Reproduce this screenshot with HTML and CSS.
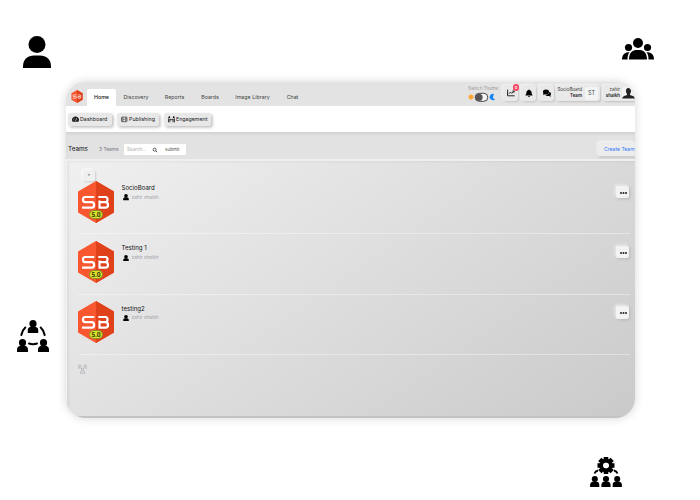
FILE: index.html
```
<!DOCTYPE html>
<html lang="en">
<head>
<meta charset="utf-8">
<title>Teams</title>
<link rel="stylesheet" href="styles.css">
</head>
<body>
<svg class="defs" width="0" height="0">
  <symbol id="user" viewBox="0 0 28 32"><circle cx="14" cy="8.5" r="8.5"/><path d="M0 32v-1.500C0 23 5 19.500 11 19.500h6c6 0 11 3.500 11 11V32z"/></symbol>
  <symbol id="bust" viewBox="0 0 12 14"><circle cx="6" cy="3.900" r="3.900"/><path d="M0 14v-2.500C0 8.800 1.500 7.500 3.500 7.200h5c2 .3 3.500 1.600 3.500 4.300V14z"/></symbol>
  <symbol id="hexlogo" viewBox="0 0 36 42">
    <path fill="#f9572f" d="M18 0 36 10.500v21L18 42 0 31.500v-21z"/>
    <path fill="#df421b" d="M18 0 36 10.500v21L18 42z"/>
    <path fill="none" stroke="#fff" stroke-width="2.200" d="M16.300 16H7q-2 0-2 2.600t2 2.600h6.800q2.300 0 2.300 2.700t-2.300 2.700H4M20.300 16h7.200q2 0 2 2.600t-2 2.600h-6M27.500 21.200q2.500 0 2.500 2.700t-2.500 2.700h-6V19.500"/>
  </symbol>
</svg>

<svg class="deco deco-user"><use href="#user"/></svg>
<svg class="deco deco-group" viewBox="0 0 32 22"><circle cx="16" cy="5" r="5"/><circle cx="6.500" cy="9.500" r="3.600"/><circle cx="25.500" cy="9.500" r="3.600"/><path d="M7 21.500c0-6 3-9.500 7-9.500h4c4 0 7 3.500 7 9.500zM0 21.500c0-4 2-7 6-7.300h1.500C6 16 5.500 18 5.500 21.500zM32 21.500c0-4-2-7-6-7.300h-1.500c1.500 1.800 2 3.800 2 7.300z"/></svg>
<svg class="deco deco-circle" viewBox="0 0 32 32">
  <use href="#bust" x="10.500" y="0" width="11" height="13"/><use href="#bust" x="0" y="19" width="11" height="13"/><use href="#bust" x="21" y="19" width="11" height="13"/>
  <path fill="none" stroke="#000" stroke-width="2" stroke-linecap="round" d="M8.300 7.500Q5 10.500 4.300 15M23.700 7.500Q27 10.500 27.700 15M12 23.500q4 1.300 8 0"/>
</svg>
<svg class="deco deco-gear" viewBox="0 0 32 30">
  <circle cx="16" cy="8.500" r="4.800" fill="none" stroke="#000" stroke-width="4"/>
  <g stroke="#000" stroke-width="4.600"><path d="M16 0v3.500M16 13.500V17M7.500 8.500H11M21 8.500h3.500M9.800 2.300l2.400 2.400M19.800 12.300l2.400 2.400M22.200 2.300l-2.400 2.400M12.200 12.300l-2.400 2.400"/></g>
  <circle cx="16" cy="8.500" r="2.800" fill="#fff"/>
  <path fill="none" stroke="#000" stroke-width="2" d="M4.500 16.500q1-2.500 3.500-3M27.500 16.500q-1-2.500-3.500-3"/>
  <use href="#bust" x="0" y="19" width="9.600" height="11"/><use href="#bust" x="11.200" y="19" width="9.600" height="11"/><use href="#bust" x="22.400" y="19" width="9.600" height="11"/>
</svg>

<main class="app">
  <header class="topbar">
    <svg class="brand"><use href="#hexlogo"/></svg>
    <nav class="nav">
      <a class="active">Home</a><a>Discovery</a><a>Reports</a><a>Boards</a><a>Image Library</a><a>Chat</a>
    </nav>
    <div class="theme">
      <span>Switch Theme</span>
      <svg width="28" height="10" viewBox="0 0 28 10">
        <circle cx="3" cy="5" r="2.200" fill="#ffa632"/><circle cx="3" cy="5" r="2.500" fill="none" stroke="#ffa632" stroke-width=".8" stroke-dasharray=".8 .7"/>
        <rect x="7.200" y="1.300" width="12.600" height="8" rx="4" fill="#f4f4f4" stroke="#333" stroke-width=".9"/><circle cx="11" cy="5.300" r="3.600" fill="#555"/>
        <path fill="#1686f5" d="M26 2a3.200 3.200 0 1 0 1.200 5.200Q23.500 7 26 2z"/>
      </svg>
    </div>
    <div class="tools">
      <span class="tool"><svg viewBox="0 0 8 8"><path fill="none" stroke="#111" stroke-width=".9" d="M.6.700v6.100h7M1.800 4.800l1.700-1.700 1.300 1.300L7 2.200M5.300 2H7v1.700"/></svg><b class="badge">0</b></span>
      <span class="tool"><svg viewBox="0 0 8 8"><path d="M4 .4c.5 0 .6.300.6.600 1.400.4 2 1.300 2 2.600 0 1.500.4 1.900.9 2.500v.4H.5v-.4c.5-.6.9-1 .9-2.500 0-1.300.6-2.200 2-2.600 0-.3.100-.6.600-.6zM3 7h2q-.2.900-1 .9T3 7z"/></svg></span>
      <span class="tool"><svg viewBox="0 0 8 8"><ellipse cx="3" cy="3" rx="3" ry="2.400"/><path d="M.8 3.500 0 6l2.500-1zM6.300 2.800C8.300 3.600 8.500 5.400 7.300 6.300L8 7.700l-2-.7C4.500 7.200 3 6.800 2.500 5.900 5 5.900 6.500 4.500 6.300 2.800z"/></svg></span>
    </div>
    <div class="team-pick"><span>SocioBoard<br><b>Team</b></span><i>ST</i></div>
    <div class="account"><span>zahir<br><b>shaikh</b></span>
      <svg viewBox="0 0 13 13"><rect width="13" height="13" rx="2" fill="#f2f2f2"/><path fill="#222" d="M6.500 1.500c2 0 2.700 1.300 2.500 3.200-.1 1.500-.8 2.100-1 2.700v1l3 1.100q2 .6 2 2.500H.2q0-1.900 2-2.500l2.800-1.100v-1C4.600 6.800 4.100 6 4 4.700 3.800 2.800 4.500 1.500 6.500 1.500z"/></svg>
    </div>
  </header>
  <div class="subbar">
    <a class="chip dash"><svg viewBox="0 0 8 7"><path fill="#222" d="M4 .3a3.800 3.800 0 0 0-3.300 6h6.600A3.800 3.800 0 0 0 4 .3z"/><path stroke="#eee" stroke-width=".7" d="m4 5.300 1.500-3M1.500 4h.7M2.300 2l.5.500"/></svg><span>Dashboard</span></a>
    <a class="chip publ"><svg viewBox="0 0 8 7"><rect x=".6" y="1" width="6.200" height="5.300" rx=".6" fill="none" stroke="#333" stroke-width=".8"/><path stroke="#333" stroke-width=".6" d="M2.200 1v5.300M5.300 1v5.300M2.200 3.600h3M.6 2.700h1.600M.6 4.500h1.600M5.300 2.700h1.500M5.300 4.500h1.500"/></svg><span>Publishing</span></a>
    <a class="chip enga"><svg viewBox="0 0 8 7"><path fill="none" stroke="#222" d="M.6 7V2.500M2.200 7V2.800M5.800 7V2.800M7.400 7V2.500M2 4h4"/><circle cx="1.500" cy="1.200" r="1"/><circle cx="6.500" cy="1.200" r="1"/></svg><span>Engagement</span></a>
  </div>
  <div class="teambar">
    <h1>Teams</h1><span class="count">3 Teams</span>
    <div class="search"><span>Search...</span><svg viewBox="0 0 6 6"><circle cx="2.600" cy="2.600" r="1.500" fill="none" stroke="#333" stroke-width=".8"/><path stroke="#333" stroke-width=".8" d="m3.700 3.700 1.500 1.500"/></svg><b>submit</b></div>
    <a class="create">Create Team</a>
  </div>
  <section class="list">
    <span class="plus">+</span>
    <article class="row"><div class="logo"><svg><use href="#hexlogo"/></svg><b>5.0</b></div><div class="info"><h2>SocioBoard</h2><p><svg><use href="#bust"/></svg>zahir shaikh</p></div><span class="more"><svg viewBox="0 0 7 2"><circle cx="1" cy="1" r="1"/><circle cx="3.500" cy="1" r="1"/><circle cx="6" cy="1" r="1"/></svg></span></article>
    <article class="row"><div class="logo"><svg><use href="#hexlogo"/></svg><b>5.0</b></div><div class="info"><h2>Testing 1</h2><p><svg><use href="#bust"/></svg>zahir shaikh</p></div><span class="more"><svg viewBox="0 0 7 2"><circle cx="1" cy="1" r="1"/><circle cx="3.500" cy="1" r="1"/><circle cx="6" cy="1" r="1"/></svg></span></article>
    <article class="row"><div class="logo"><svg><use href="#hexlogo"/></svg><b>5.0</b></div><div class="info"><h2>testing2</h2><p><svg><use href="#bust"/></svg>zahir shaikh</p></div><span class="more"><svg viewBox="0 0 7 2"><circle cx="1" cy="1" r="1"/><circle cx="3.500" cy="1" r="1"/><circle cx="6" cy="1" r="1"/></svg></span></article>
    <svg class="crew" viewBox="0 0 9 10"><g fill="none" stroke="#aaaab5" stroke-width=".7"><circle cx="1.600" cy="2" r="1.200"/><circle cx="7.400" cy="2" r="1.200"/><circle cx="4.500" cy="5" r="1.200"/><path d="M.5 5q0-1.500 1.500-1.500l1 1M8.500 5q0-1.500-1.500-1.500l-1 1M2.300 9.300q0-2.500 2.200-2.500t2.200 2.500z"/></g></svg>
  </section>
</main>
</body>
</html>
```
FILE: styles.css
```
* { box-sizing: border-box; }
body { margin: 0; height: 500px; background: #fff; padding: 82px 65px 0 66px; overflow: hidden; font-family: Inter, "Noto Sans", sans-serif; font-size: 5.3px; line-height: 1.2; color: #333; position: relative; }
svg { display: block; flex: none; }
h1, h2, p { margin: 0; font-weight: 400; }
.defs, .deco { position: absolute; }
.deco-user { left: 23px; top: 36px; width: 28px; height: 32px; }
.deco-group { left: 622px; top: 38px; width: 32px; height: 22px; }
.deco-circle { left: 17px; top: 320px; width: 32px; height: 32px; }
.deco-gear { left: 590px; top: 457px; width: 32px; height: 30px; }

.app { height: 336px; display: flex; flex-direction: column; border-radius: 20px; overflow: hidden; background: #e2e2e2; box-shadow: 0 0 10px rgba(0,0,0,.17); }
.topbar { height: 24px; flex: none; display: flex; background: #e3e3e3; }
.brand { width: 12px; height: 13px; margin: 8px 4px 0 4.500px; }
.nav { display: grid; grid-template-columns: 29px 40px 37px 34px 51px 29px; height: 17px; margin-top: 7px; line-height: 17px; text-align: center; white-space: nowrap; margin-left: .5px; }
.nav a { color: #444; }
.nav .active { background: #fff; color: #111; border-radius: 2px 2px 0 0; font-weight: 500; }
.theme { width: 30px; margin: 4px 0 0 auto; font-size: 4.500px; line-height: 5px; color: #999; white-space: nowrap; }
.theme svg { margin-top: 1px; }
.tools { display: flex; gap: 3px; margin: 3px 0 0 5px; }
.tool { position: relative; width: 15px; height: 16px; display: grid; place-items: center; border-radius: 3px; background: #e9e9e9; box-shadow: 1px 1px 2px #c5c5c5, -1px -1px 2px #f6f6f6; }
.tool svg { width: 8px; height: 8px; }
.badge { position: absolute; right: -1px; top: -1px; width: 6px; height: 7px; border-radius: 3px; background: #f5425e; color: #fff; font-size: 4px; line-height: 7px; text-align: center; }
.team-pick, .account { height: 16px; margin: 3px 0 0 2px; display: flex; align-items: center; justify-content: flex-end; text-align: right; border-radius: 3px; background: #e9e9e9; box-shadow: 1px 1px 2px #c0c0c0, -1px -1px 2px #f6f6f6; font-size: 4.500px; line-height: 6.300px; white-space: nowrap; }
.team-pick { width: 44px; gap: 3px; padding-right: 2px; }
.team-pick b, .account b { font-weight: 600; color: #222; }
.team-pick i { width: 13px; height: 13px; border-radius: 2px; background: #f3f4f5; font-style: normal; font-size: 5.500px; line-height: 13px; text-align: center; color: #444; }
.account { width: 32px; gap: 2px; margin-left: 3px; border-radius: 3px 0 0 3px; }
.account svg { width: 13px; height: 14px; }

.subbar { height: 26px; flex: none; display: flex; gap: 5px; padding: 7px 0 0 2px; background: #fff; }
.chip { height: 12.500px; display: flex; align-items: center; gap: 1px; padding-left: 4px; border-radius: 2.500px; background: #e8e8e8; box-shadow: 1.500px 1.500px 3px #bdbdbd; white-space: nowrap; color: #222; }
.chip svg { width: 7px; height: 6.500px; }
.dash { width: 44px; }
.publ { width: 42px; }
.enga { width: 47px; }

.teambar { height: 27px; flex: none; display: flex; align-items: flex-start; padding: 8px 0 0 2px; box-shadow: inset 0 2px 3px #d2d2d2; }
.teambar h1 { width: 31px; font-size: 6.400px; line-height: 18px; color: #111; }
.count { width: 25px; font-size: 4.900px; line-height: 18px; color: #777788; }
.search { width: 62px; height: 11px; margin: 4px 0 0; display: flex; align-items: center; background: #fff; border-radius: 1px; padding-left: 3px; font-size: 4.600px; }
.search span { width: 25px; color: #aaa; }
.search svg { width: 6px; height: 6px; }
.search b { font-weight: 400; margin-left: 7px; color: #555; }
.create { margin: 1.500px 0 0 auto; width: 37px; height: 14px; padding-left: 6px; line-height: 15px; border-radius: 2px 0 0 2px; background: #ececec; box-shadow: 1px 2px 3px #c8c8c8, -1px -1px 2px #f7f7f7; color: #377dfa; white-space: nowrap; font-size: 5.100px; }

.list { position: relative; flex: 1; padding: 13px 5px 0 10.500px; background: linear-gradient(145deg, #f0f0f0, #cacaca); border-top: 2px solid #efefef; border-left: 1.500px solid #f2f2f2; border-bottom: 2px solid #c3c3c3; box-shadow: inset 2px 1px 3px rgba(0,0,0,.05); }
.plus { position: absolute; left: 16px; top: 9px; width: 12px; height: 11px; border-radius: 2px; background: #efefef; box-shadow: 1px 1px 2px #ccc, -1px -1px 3px #fff; line-height: 9px; text-align: center; font-size: 5px; }
.row { height: 60.300px; display: flex; padding-top: 6.500px; border-bottom: 1.500px solid rgba(255,255,255,.38); }
.logo { width: 36px; height: 42px; position: relative; }
.logo svg { width: 36px; height: 42px; }
.logo b { position: absolute; left: 11.500px; top: 29px; width: 14px; height: 9px; border: .5px solid #8d8d22; border-radius: 5px; background: #dce52d; color: #34360e; font-size: 5.500px; font-weight: 800; line-height: 8px; text-align: center; }
.info { margin-left: 8px; padding-top: 3.500px; flex: 1; }
.info h2 { font-size: 6.100px; line-height: 8px; color: #111; }
.info p { display: flex; align-items: center; gap: 3px; margin-top: 1px; height: 9px; font-size: 4.800px; color: #a5a5ad; }
.info p svg { width: 6px; height: 6.500px; margin-left: 1px; color: #000; fill: #000; }
.more { width: 13px; height: 12.500px; margin: 5px 1px 0 0; display: flex; align-items: center; justify-content: center; padding: 2px 0 0 1.500px; border-radius: 2px; background: #f3f3f3; box-shadow: 1px 1px 3px #b5b5b5, -1px -1px 3px #f5f5f5; }
.more svg { width: 7px; height: 2px; fill: #222; }
.crew { width: 9px; height: 10px; margin-top: 9px; }
```
